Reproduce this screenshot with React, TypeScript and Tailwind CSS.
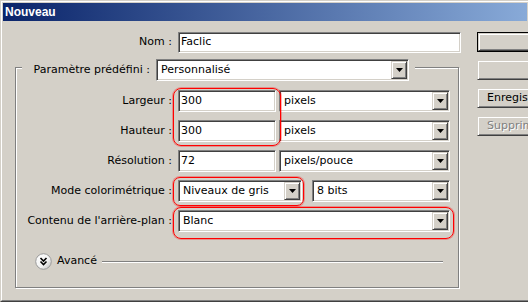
const sunken =
  "border border-t-[#808080] border-l-[#808080] border-r-white border-b-white bg-white p-px shadow-[inset_1px_1px_0_#404040,inset_-1px_-1px_0_#d4d0c8]";
const raised =
  "bg-[#d4d0c8] border border-t-[#d4d0c8] border-l-[#d4d0c8] border-r-[#404040] border-b-[#404040] shadow-[inset_1px_1px_0_#fff,inset_-1px_-1px_0_#808080]";

const Arrow = () => (
  <svg width="7" height="4" viewBox="0 0 7 4">
    <polygon points="0,0 7,0 3.5,4" fill="#000" />
  </svg>
);

const Input = ({ value, w, h }: { value: string; w: string; h: string }) => (
  <div className={`${sunken} ${w} ${h} flex items-center pl-[2px]`}>
    <span>{value}</span>
  </div>
);

const Combo = ({ value, w }: { value: string; w: string }) => (
  <div className={`${sunken} ${w} h-[22px] flex`}>
    <div className="flex-1 flex items-center pl-[3px] whitespace-nowrap overflow-hidden">{value}</div>
    <div className={`${raised} w-[16px] h-full flex items-center justify-center`}>
      <Arrow />
    </div>
  </div>
);

const Row = ({ label, children }: { label: string; children: React.ReactNode }) => (
  <div className="flex items-center h-[22px]">
    <div className="w-[156px] text-right whitespace-nowrap">{label}</div>
    <div className="ml-[6px] flex items-center">{children}</div>
  </div>
);

const Button = ({ label, isDefault, disabled, left }: { label: string; isDefault?: boolean; disabled?: boolean; left?: boolean }) => (
  <div className={`w-[150px] h-[20px] ${isDefault ? "border border-black" : ""}`}>
    <div
      className={`${raised} h-full flex items-center whitespace-nowrap overflow-hidden ${left ? "pl-[9px]" : "justify-center"} ${
        disabled ? "text-[#808080] [text-shadow:1px_1px_0_#fff]" : ""
      }`}
    >
      {label}
    </div>
  </div>
);

export default function App() {
  return (
    <div className="w-[528px] h-[302px] overflow-hidden bg-[#d4d0c8] font-['DejaVu_Sans',sans-serif] text-[11px] text-black border-t border-l border-[#d4d0c8] border-b border-b-[#404040]">
      <div className="h-full border-t border-l border-white border-b border-b-[#808080] p-px flex flex-col">
        {/* title bar */}
        <div className="h-[18px] flex-none flex items-center pl-[2px] bg-[linear-gradient(90deg,#0a246a,#88aad8)]">
          <span className="text-white font-bold text-[12px] font-['Liberation_Sans',sans-serif]">Nouveau</span>
        </div>

        <div className="flex flex-1">
          {/* left */}
          <div className="w-[474px] flex-none pt-[11px]">
            <div className="flex items-center h-[21px]">
              <div className="w-[169px] text-right">Nom :</div>
              <div className="ml-[6px]">
                <Input value="Faclic" w="w-[283px]" h="h-[21px]" />
              </div>
            </div>

            <div className="relative mt-[14px] ml-[12px] w-[444px] h-[221px] border border-[#808080] shadow-[inset_1px_1px_0_#fff,1px_1px_0_#fff]">
              <div className="-mt-[10px] ml-[6px] w-[393px] h-[24px] flex items-center bg-[#d4d0c8]">
                <div className="w-[128px] text-right whitespace-nowrap">Paramètre prédéfini :</div>
                <div className="ml-[6px]">
                  <Combo value="Personnalisé" w="w-[253px]" />
                </div>
              </div>

              <div className="mt-[8px] flex flex-col gap-[8px]">
                <Row label="Largeur :">
                  <Input value="300" w="w-[98px]" h="h-[22px]" />
                  <div className="ml-[3px]">
                    <Combo value="pixels" w="w-[171px]" />
                  </div>
                </Row>
                <Row label="Hauteur :">
                  <Input value="300" w="w-[98px]" h="h-[22px]" />
                  <div className="ml-[3px]">
                    <Combo value="pixels" w="w-[171px]" />
                  </div>
                </Row>
                <Row label="Résolution :">
                  <Input value="72" w="w-[98px]" h="h-[22px]" />
                  <div className="ml-[3px]">
                    <Combo value="pixels/pouce" w="w-[171px]" />
                  </div>
                </Row>
                <Row label="Mode colorimétrique :">
                  <Combo value="Niveaux de gris" w="w-[124px]" />
                  <div className="ml-[10px]">
                    <Combo value="8 bits" w="w-[138px]" />
                  </div>
                </Row>
                <Row label="Contenu de l'arrière-plan :">
                  <Combo value="Blanc" w="w-[272px]" />
                </Row>
              </div>

              <div className="mt-[21px] h-[17px] flex items-center ml-[19px] mr-[15px]">
                <svg width="17" height="17" viewBox="0 0 17 17">
                  <defs>
                    <linearGradient id="g" x1="0" y1="0" x2="1" y2="1">
                      <stop offset="0" stopColor="#ffffff" />
                      <stop offset="0.6" stopColor="#f2f2f2" />
                      <stop offset="1" stopColor="#b8b8b8" />
                    </linearGradient>
                  </defs>
                  <circle cx="8.5" cy="8.5" r="7.8" fill="url(#g)" stroke="#9a9a9a" strokeWidth="1" />
                  <path d="M5.5 5 L8.5 8 L11.5 5 M5.5 8.5 L8.5 11.5 L11.5 8.5" fill="none" stroke="#000" strokeWidth="1.6" />
                </svg>
                <span className="ml-[5px]">Avancé</span>
                <div className="ml-[5px] flex-1 border-t border-t-[#808080] border-b border-b-white" />
              </div>

              {/* red highlight marks */}
              <div className="absolute left-[157px] top-[20px] w-[108px] h-[58px] rounded-[8px] border border-[#ff0000] shadow-[0_0_0_1px_rgba(255,0,0,0.3)]" />
              <div className="absolute left-[157px] top-[109px] w-[131px] h-[29px] rounded-[7px] border border-[#ff0000] shadow-[0_0_0_1px_rgba(255,0,0,0.3)]" />
              <div className="absolute left-[157px] top-[139px] w-[281px] h-[32px] rounded-[8px] border border-[#ff0000] shadow-[0_0_0_1px_rgba(255,0,0,0.3)]" />
            </div>
          </div>

          {/* right buttons */}
          <div className="pt-[11px] flex flex-col gap-[8px]">
            <Button label="OK" isDefault />
            <Button label="Annuler" />
            <Button label="Enregistrer le paramètre prédéfini..." left />
            <Button label="Supprimer le paramètre prédéfini..." left disabled />
          </div>
        </div>
      </div>
    </div>
  );
}
